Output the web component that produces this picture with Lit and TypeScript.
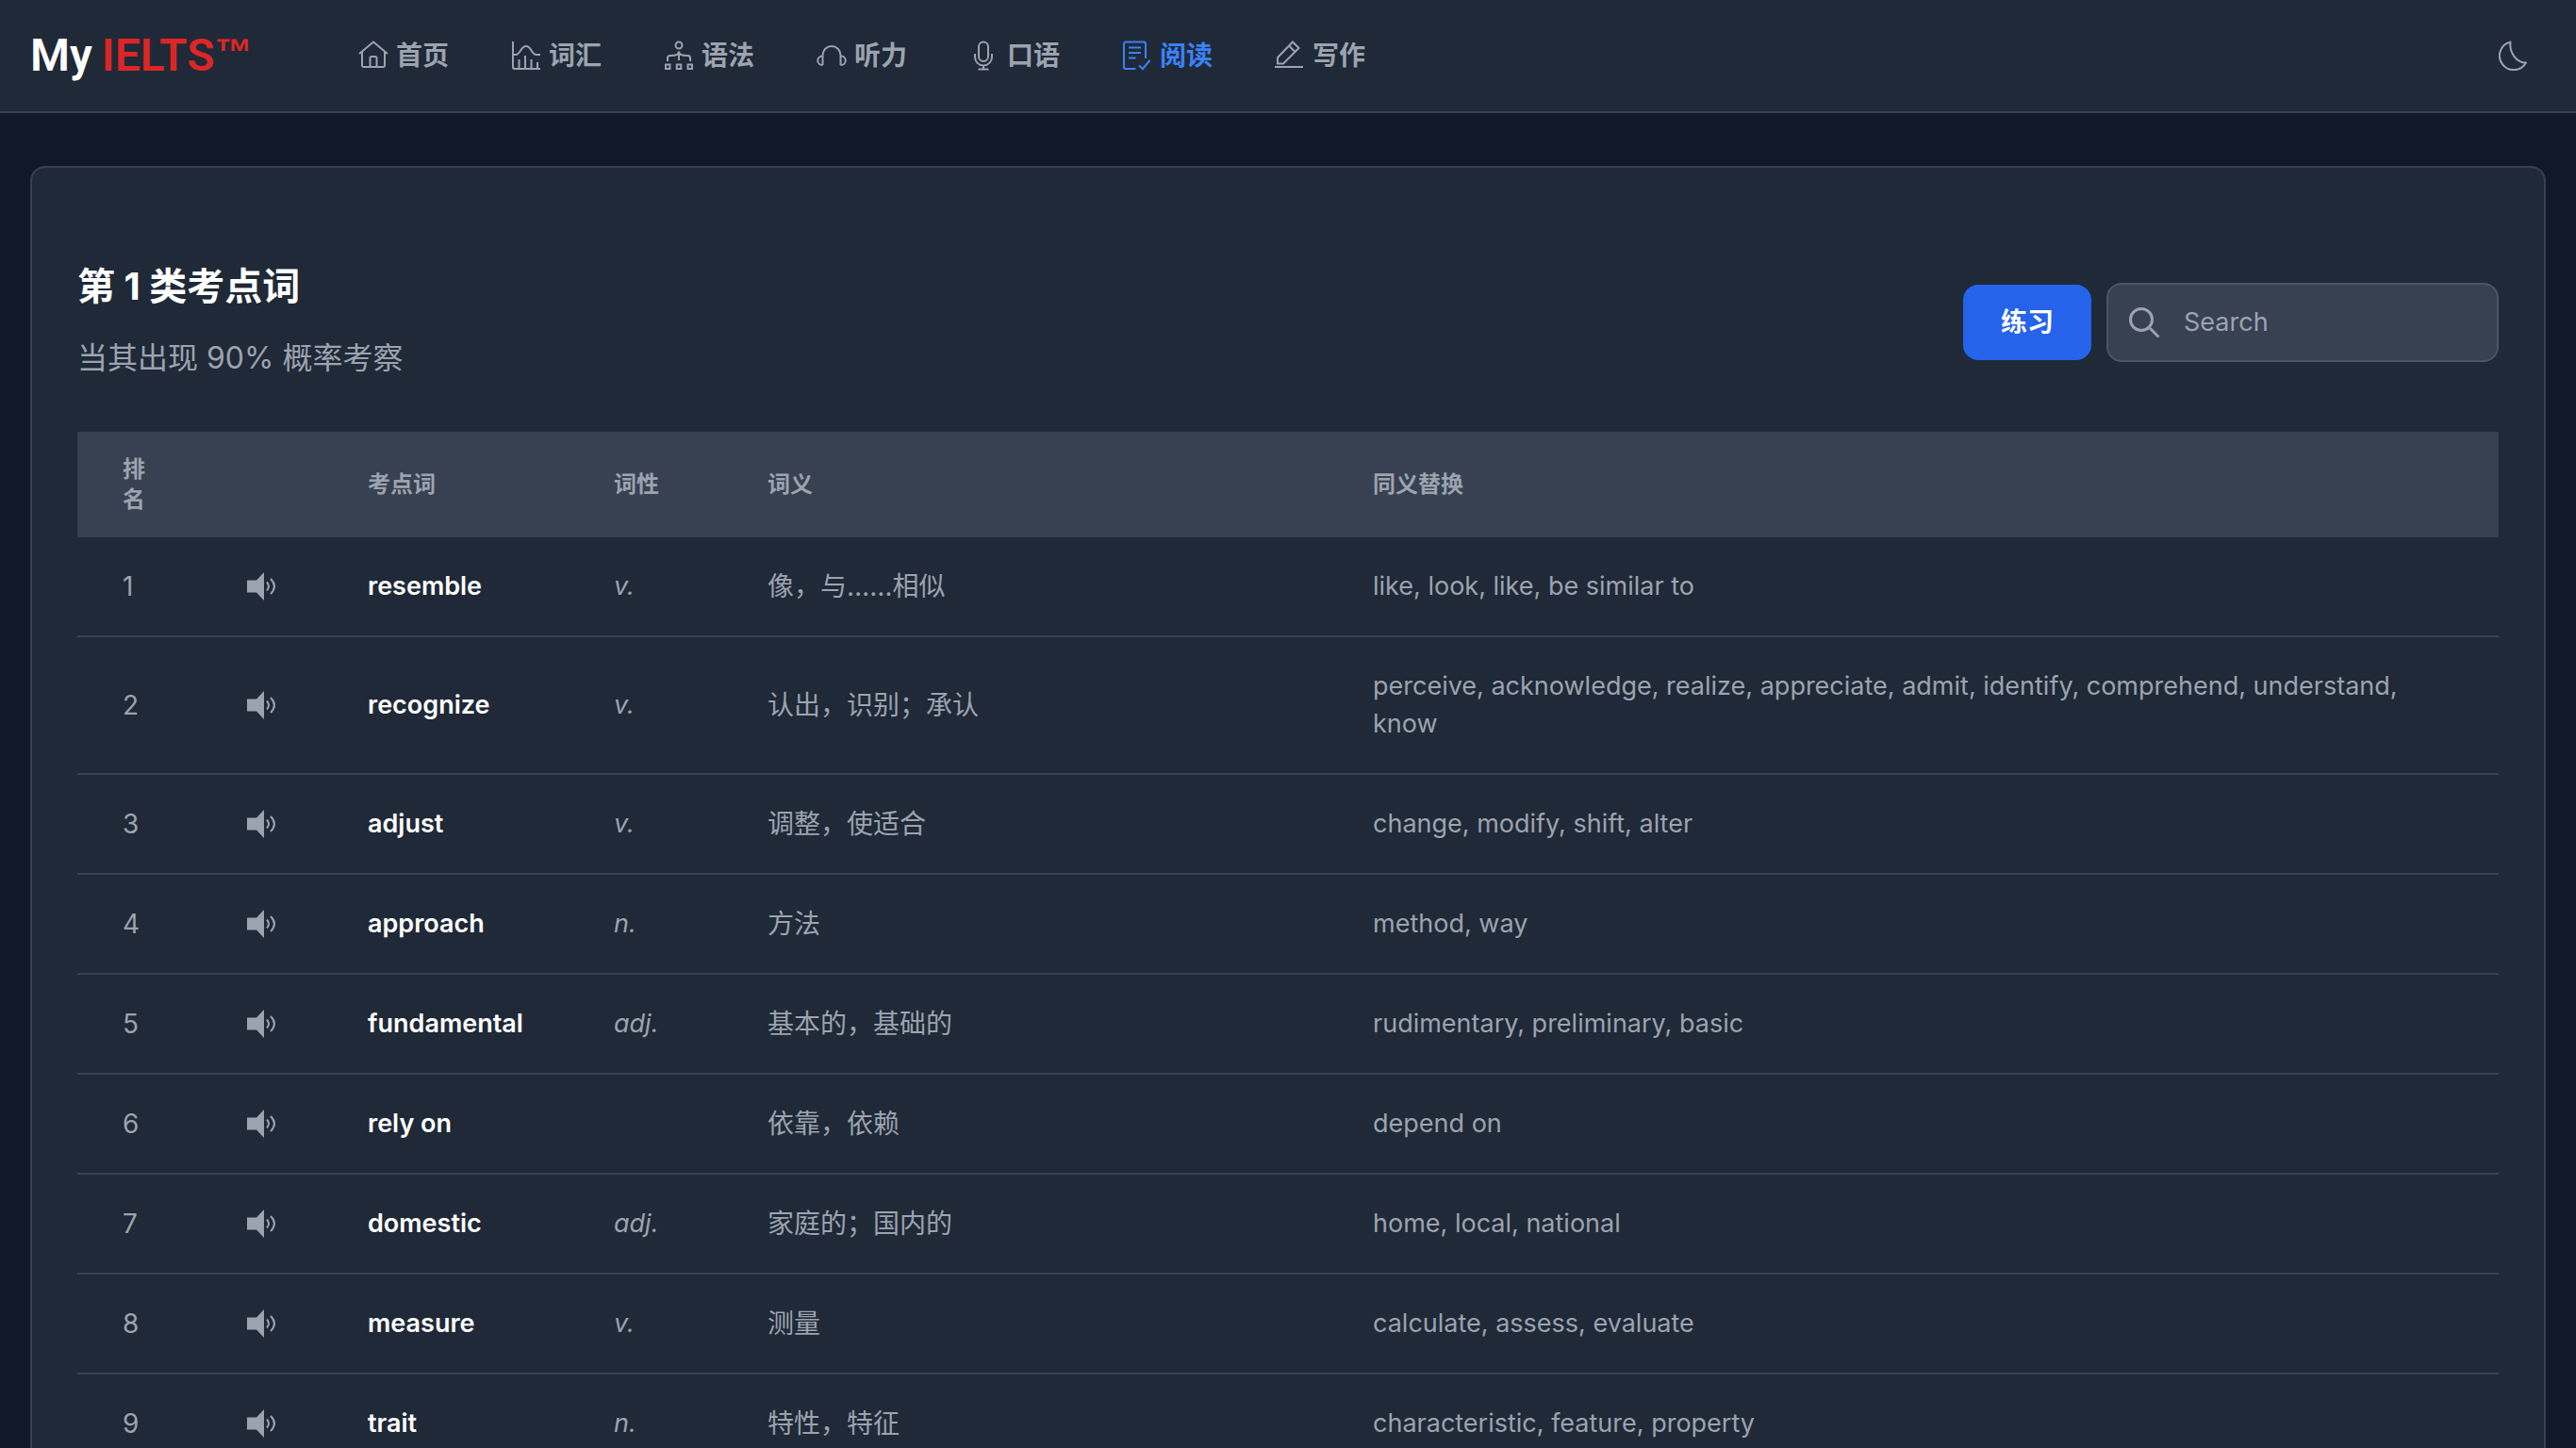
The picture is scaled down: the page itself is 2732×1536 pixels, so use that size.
import { LitElement, html, css, svg } from "lit";
import { customElement, state } from "lit/decorators.js";

interface NavItem {
  label: string;
  icon: unknown;
  active?: boolean;
}

interface Word {
  rank: number;
  word: string;
  pos: string;
  meaning: string;
  synonyms: string;
}

const NAV: NavItem[] = [
  {
    label: "首页",
    icon: svg`<path d="M1 14 16 1.500 31 14"/><path d="M4 12V26.500a1.500 1.500 0 0 0 1.500 1.500h21A1.500 1.500 0 0 0 28 26.500V12"/><path d="M12.500 28V18.500a1.500 1.500 0 0 1 1.500-1.500h4a1.500 1.500 0 0 1 1.500 1.500V28"/>`,
  },
  {
    label: "词汇",
    icon: svg`<path d="M2 1v27a2 2 0 0 0 2 2h27"/><path d="M2 15h3c5 0 5-9 11-9s5 9 11 9h4"/><path d="M8.500 20v10M15 16v14M21.500 20v10M28 23v7"/>`,
  },
  {
    label: "语法",
    icon: svg`<circle cx="16" cy="5" r="3.500"/><path d="M16 12v9M4 22v-3.500A2.500 2.500 0 0 1 6.500 16h1C12 16 16 15 16 11.500c0 3.500 4 4.500 8.500 4.500h1a2.500 2.500 0 0 1 2.500 2.500V22"/><path d="M2 25.500h4.500V30H2zM13.750 25.500h4.500V30h-4.500zM25.500 25.500H30V30h-4.500z"/>`,
  },
  {
    label: "听力",
    icon: svg`<path d="M6.500 26V15.500a9.500 9.500 0 0 1 19 0V26"/><path d="M6.500 16.500H6a4.750 4.750 0 0 0 0 9.500h.500M25.500 16.500h.500a4.750 4.750 0 0 1 0 9.500h-.500"/>`,
  },
  {
    label: "口语",
    icon: svg`<rect x="10" y="1.500" width="10" height="20.500" rx="5"/><path d="M6 14v3.500a9 9 0 0 0 18 0V14M15 26.500v4M9.500 30.500h11"/>`,
  },
  {
    label: "阅读",
    active: true,
    icon: svg`<path d="M14.500 30H4a2 2 0 0 1-2-2V3.500a2 2 0 0 1 2-2h19a2 2 0 0 1 2 2V19"/><path d="M7 7.500h13M7 13h13M7 18.500h7.500M18 26.500l4 3.500 7.500-9"/>`,
  },
  {
    label: "写作",
    icon: svg`<path d="M0 28h30"/><path d="M3 24.500v-6.500L19 1.500l6.500 6.500L9 24.500zM15 5.500l6.500 6.500"/>`,
  },
];

const WORDS: Word[] = [
  { rank: 1, word: "resemble", pos: "v.", meaning: "像，与……相似", synonyms: "like, look, like, be similar to" },
  { rank: 2, word: "recognize", pos: "v.", meaning: "认出，识别；承认", synonyms: "perceive, acknowledge, realize, appreciate, admit, identify, comprehend, understand, know" },
  { rank: 3, word: "adjust", pos: "v.", meaning: "调整，使适合", synonyms: "change, modify, shift, alter" },
  { rank: 4, word: "approach", pos: "n.", meaning: "方法", synonyms: "method, way" },
  { rank: 5, word: "fundamental", pos: "adj.", meaning: "基本的，基础的", synonyms: "rudimentary, preliminary, basic" },
  { rank: 6, word: "rely on", pos: "", meaning: "依靠，依赖", synonyms: "depend on" },
  { rank: 7, word: "domestic", pos: "adj.", meaning: "家庭的；国内的", synonyms: "home, local, national" },
  { rank: 8, word: "measure", pos: "v.", meaning: "测量", synonyms: "calculate, assess, evaluate" },
  { rank: 9, word: "trait", pos: "n.", meaning: "特性，特征", synonyms: "characteristic, feature, property" },
];

@customElement("app-root")
export class AppRoot extends LitElement {
  @state() private query = "";

  static styles = css`
    :host {
      display: block;
      height: 100vh;
      overflow: hidden;
      background: #111827;
      color: #9ca3af;
      font-family: Inter, "Noto Sans CJK SC", sans-serif;
      font-size: 28px;
      line-height: 40px;
    }
    * {
      box-sizing: border-box;
    }
    button,
    input {
      font: inherit;
      margin: 0;
    }
    a {
      color: inherit;
      text-decoration: none;
    }
    .icon {
      display: block;
      flex: none;
      width: 32px;
      height: 32px;
      fill: none;
      stroke: currentColor;
      stroke-width: 2;
    }
    .bar {
      display: flex;
      align-items: center;
      height: 120px;
      padding: 0 32px;
      background: #1f2937;
      border-bottom: 2px solid #374151;
    }
    .brand {
      display: flex;
      align-items: center;
      gap: 10px;
      width: 348px;
      flex: none;
      color: #fff;
      font-family: Roboto, sans-serif;
      font-size: 48px;
      line-height: 56px;
      font-weight: 600;
      white-space: nowrap;
    }
    .brand-accent {
      display: flex;
      align-items: flex-start;
      color: #dc2626;
    }
    .brand-mark {
      font-family: "Liberation Sans", sans-serif;
      font-size: 40px;
      line-height: 48px;
    }
    .nav {
      display: flex;
      flex: 1;
      gap: 66px;
    }
    .nav-link {
      display: flex;
      align-items: center;
      gap: 8px;
      font-weight: 600;
    }
    .active {
      color: #3b82f6;
    }
    .theme {
      padding: 18px;
      border: 0;
      background: none;
      color: inherit;
      cursor: pointer;
    }
    .card {
      margin: 56px 32px 0;
      padding: 0 48px;
      background: #1f2937;
      border: 2px solid #374151;
      border-radius: 16px;
    }
    .head {
      display: flex;
      align-items: center;
      justify-content: space-between;
      padding: 96px 0 48px;
    }
    .heading {
      display: grid;
      gap: 24px;
      padding: 2px 0 6px;
    }
    .title {
      margin: 0;
      color: #fff;
      font-size: 40px;
      line-height: 56px;
      font-weight: 700;
    }
    .subtitle {
      margin: 0;
      font-size: 32px;
      line-height: 48px;
    }
    .tools {
      display: flex;
      align-items: center;
      gap: 16px;
    }
    .practice {
      padding: 20px 40px;
      border: 0;
      border-radius: 16px;
      background: #2563eb;
      color: #fff;
      font-weight: 600;
      cursor: pointer;
    }
    .search {
      display: flex;
      align-items: center;
      gap: 26px;
      width: 416px;
      padding: 20px 22px;
      border: 2px solid #4b5563;
      border-radius: 16px;
      background: #374151;
    }
    .search-icon {
      stroke-width: 3;
    }
    .search-input {
      flex: 1;
      min-width: 0;
      height: 40px;
      padding: 0;
      border: 0;
      outline: 0;
      background: none;
      color: #fff;
      font-size: 27px;
    }
    .search-input::placeholder {
      color: #9ca3af;
      opacity: 1;
    }
    .words {
      width: 100%;
      table-layout: fixed;
      border-collapse: separate;
      border-spacing: 0;
      text-align: left;
    }
    .col-rank,
    .col-sound {
      width: 130px;
    }
    .col-word {
      width: 261px;
    }
    .col-pos {
      width: 163px;
    }
    .col-meaning {
      width: 25%;
    }
    .words th {
      padding: 24px 48px;
      background: #374151;
      font-size: 24px;
      line-height: 32px;
      font-weight: 700;
    }
    .words td {
      padding: 32px 48px;
      border-bottom: 2px solid #374151;
    }
    .words .word {
      padding-right: 0;
      color: #fff;
      font-weight: 600;
      white-space: nowrap;
    }
    .word,
    .pos,
    .synonyms {
      font-size: 27px;
    }
    .pos {
      font-style: italic;
    }
    .sound {
      display: block;
      padding: 0;
      border: 0;
      background: none;
      color: inherit;
      cursor: pointer;
    }
    .sound .icon {
      overflow: visible;
    }
  `;

  private onInput(e: Event) {
    this.query = (e.target as HTMLInputElement).value;
  }

  private get rows(): Word[] {
    const q = this.query.trim().toLowerCase();
    return q ? WORDS.filter((w) => w.word.includes(q) || w.synonyms.includes(q)) : WORDS;
  }

  render() {
    return html`
      <header class="bar">
        <a class="brand" href="#"><span>My</span> <span class="brand-accent">IELTS<span class="brand-mark">™</span></span></a>
        <nav class="nav">
          ${NAV.map(
            (n) => html`<a class="nav-link ${n.active ? "active" : ""}" href="#">
              <svg class="icon" viewBox="0 0 32 32" aria-hidden="true">${n.icon}</svg><span>${n.label}</span>
            </a>`
          )}
        </nav>
        <button class="theme" type="button" aria-label="Theme">
          <svg class="icon" viewBox="0 0 32 32" aria-hidden="true">
            <path stroke-linejoin="round" d="M12.500 1.500A15 15 0 1 0 29 23.500C19 23.500 11 13 12.500 1.500z" />
          </svg>
        </button>
      </header>
      <main class="card">
        <div class="head">
          <div class="heading">
            <h1 class="title">第 1 类考点词</h1>
            <p class="subtitle">当其出现 90% 概率考察</p>
          </div>
          <div class="tools">
            <button class="practice" type="button">练习</button>
            <label class="search">
              <svg class="icon search-icon" viewBox="0 0 32 32" aria-hidden="true">
                <circle cx="13" cy="13" r="11.500" />
                <path stroke-linecap="round" d="m23 23 7.500 7.500" />
              </svg>
              <input class="search-input" type="text" placeholder="Search" aria-label="Search" .value=${this.query} @input=${this.onInput} />
            </label>
          </div>
        </div>
        <table class="words">
          <colgroup>
            <col class="col-rank" />
            <col class="col-sound" />
            <col class="col-word" />
            <col class="col-pos" />
            <col class="col-meaning" />
            <col />
          </colgroup>
          <thead>
            <tr>
              <th scope="col">排名</th>
              <th></th>
              <th scope="col">考点词</th>
              <th scope="col">词性</th>
              <th scope="col">词义</th>
              <th scope="col">同义替换</th>
            </tr>
          </thead>
          <tbody>
            ${this.rows.map(
              (w) => html`<tr>
                <td>${w.rank}</td>
                <td>
                  <button class="sound" type="button" aria-label=${w.word}>
                    <svg class="icon" viewBox="0 0 32 32" aria-hidden="true">
                      <path fill="currentColor" stroke="none" d="M2 9.500h10L20 1v30L12 22.500H2z" />
                      <path d="M23 11.500q4 4.500 0 9M27 8q8 8 0 16" />
                    </svg>
                  </button>
                </td>
                <td class="word">${w.word}</td>
                <td class="pos">${w.pos}</td>
                <td>${w.meaning}</td>
                <td class="synonyms">${w.synonyms}</td>
              </tr>`
            )}
          </tbody>
        </table>
      </main>
    `;
  }
}
